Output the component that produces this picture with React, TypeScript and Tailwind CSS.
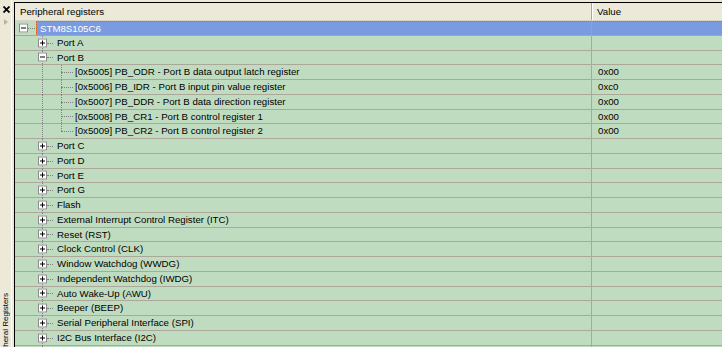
import React from 'react';

type Row = {
  label: string;
  value?: string;
  level: 0 | 1 | 2;
  toggle?: '+' | '-';
  last?: boolean;
  selected?: boolean;
};

const rows: Row[] = [
  { label: 'STM8S105C6', level: 0, toggle: '-', selected: true },
  { label: 'Port A', level: 1, toggle: '+' },
  { label: 'Port B', level: 1, toggle: '-' },
  { label: '[0x5005] PB_ODR - Port B data output latch register', value: '0x00', level: 2 },
  { label: '[0x5006] PB_IDR - Port B input pin value register', value: '0xc0', level: 2 },
  { label: '[0x5007] PB_DDR - Port B data direction register', value: '0x00', level: 2 },
  { label: '[0x5008] PB_CR1 - Port B control register 1', value: '0x00', level: 2 },
  { label: '[0x5009] PB_CR2 - Port B control register 2', value: '0x00', level: 2, last: true },
  { label: 'Port C', level: 1, toggle: '+' },
  { label: 'Port D', level: 1, toggle: '+' },
  { label: 'Port E', level: 1, toggle: '+' },
  { label: 'Port G', level: 1, toggle: '+' },
  { label: 'Flash', level: 1, toggle: '+' },
  { label: 'External Interrupt Control Register (ITC)', level: 1, toggle: '+' },
  { label: 'Reset (RST)', level: 1, toggle: '+' },
  { label: 'Clock Control (CLK)', level: 1, toggle: '+' },
  { label: 'Window Watchdog (WWDG)', level: 1, toggle: '+' },
  { label: 'Independent Watchdog (IWDG)', level: 1, toggle: '+' },
  { label: 'Auto Wake-Up (AWU)', level: 1, toggle: '+' },
  { label: 'Beeper (BEEP)', level: 1, toggle: '+' },
  { label: 'Serial Peripheral Interface (SPI)', level: 1, toggle: '+' },
  { label: 'I2C Bus Interface (I2C)', level: 1, toggle: '+' },
  // next row only peeks in below the bottom edge
  { label: '', level: 1, toggle: '+' },
];

const textPad = { 0: 'pl-[21px]', 1: 'pl-[39px]', 2: 'pl-[57px]' };
const boxLeft = { 0: 'left-[4px]', 1: 'left-[23px]', 2: 'left-[42px]' };

function ToggleBox({ sign, level }: { sign: '+' | '-'; level: 0 | 1 | 2 }) {
  return (
    <span
      className={`absolute top-1/2 -translate-y-1/2 ${boxLeft[level]} w-[9px] h-[9px] border border-[#8c8c8c] bg-white`}
    >
      <span className="absolute left-[1px] top-[3px] w-[5px] h-px bg-black" />
      {sign === '+' && <span className="absolute left-[3px] top-[1px] w-px h-[5px] bg-black" />}
    </span>
  );
}

function TreeRow({ row }: { row: Row }) {
  return (
    <div className="flex h-[14.75px] shrink-0 border-b border-[#aca899] bg-[#c0dcc0]">
      <div className={`relative w-[576px] h-full flex items-center ${textPad[row.level]}`}>
        {/* tree connector lines */}
        {row.level === 0 && (
          <span className="absolute left-[13px] top-1/2 w-[7px] border-t border-dotted border-[#808080]" />
        )}
        {row.level >= 1 && (
          <span className="absolute left-[27px] top-0 h-[15px] border-l border-dotted border-[#808080]" />
        )}
        {row.level === 1 && (
          <span className="absolute left-[32px] top-1/2 w-[6px] border-t border-dotted border-[#808080]" />
        )}
        {row.level === 2 && (
          <span
            className={`absolute left-[46px] top-0 border-l border-dotted border-[#808080] ${row.last ? 'h-[7px]' : 'h-[15px]'}`}
          />
        )}
        {row.level === 2 && (
          <span className="absolute left-[46px] top-1/2 w-[12px] border-t border-dotted border-[#808080]" />
        )}
        {row.toggle && <ToggleBox sign={row.toggle} level={row.level} />}
        <span
          className={`h-full flex-1 flex items-center pl-[3px] whitespace-nowrap ${
            row.selected
              ? 'bg-[#7b9be1] text-white border-t border-l border-dotted border-[#e0602a]'
              : 'text-black'
          }`}
        >
          {row.label}
        </span>
      </div>
      <div
        className={`flex-1 h-full flex items-center pl-[6px] border-l border-[#aca899] ${
          row.selected ? 'bg-[#7b9be1] border-t border-t-[#e0602a] border-dotted' : ''
        }`}
      >
        {row.value}
      </div>
    </div>
  );
}

export default function App() {
  return (
    <div className="w-[722px] h-[347px] overflow-hidden flex bg-[#ece9d8] text-[9.7px] leading-none font-['Liberation_Sans',Arial,sans-serif] text-black">
      <div className="relative w-[12px] h-full flex flex-col items-center border-r border-white">
        <svg width="7" height="7" viewBox="0 0 7 7" className="mt-[6px] ml-[2px]">
          <path d="M0.5 0.5 L6.5 6.5 M6.5 0.5 L0.5 6.5" stroke="#000" strokeWidth="1.8" />
        </svg>
        <svg width="4" height="6" viewBox="0 0 4 6" className="mt-[6px] ml-[1px]">
          <path d="M0 0 L4 3 L0 6 Z" fill="#b8b4a4" />
        </svg>
        <div className="flex-1" />
        <span className="[writing-mode:vertical-rl] rotate-180 whitespace-nowrap text-[8px] mb-[-18px] ml-[1px]">
          Peripheral Registers
        </span>
      </div>
      <div className="flex-1 ml-[2px] mt-[2px] border-l border-t border-black flex flex-col overflow-hidden">
        <div className="flex h-[18px] shrink-0 bg-[#ece9d8] border-b border-[#d8d4c4]">
          <div className="w-[576px] flex items-center pl-[5px]">Peripheral registers</div>
          <div className="flex-1 flex items-center pl-[5px] border-l border-[#aca899] shadow-[inset_1px_0_0_#fff]">
            Value
          </div>
        </div>
        {rows.map((r, i) => (
          <TreeRow key={i} row={r} />
        ))}
      </div>
    </div>
  );
}
